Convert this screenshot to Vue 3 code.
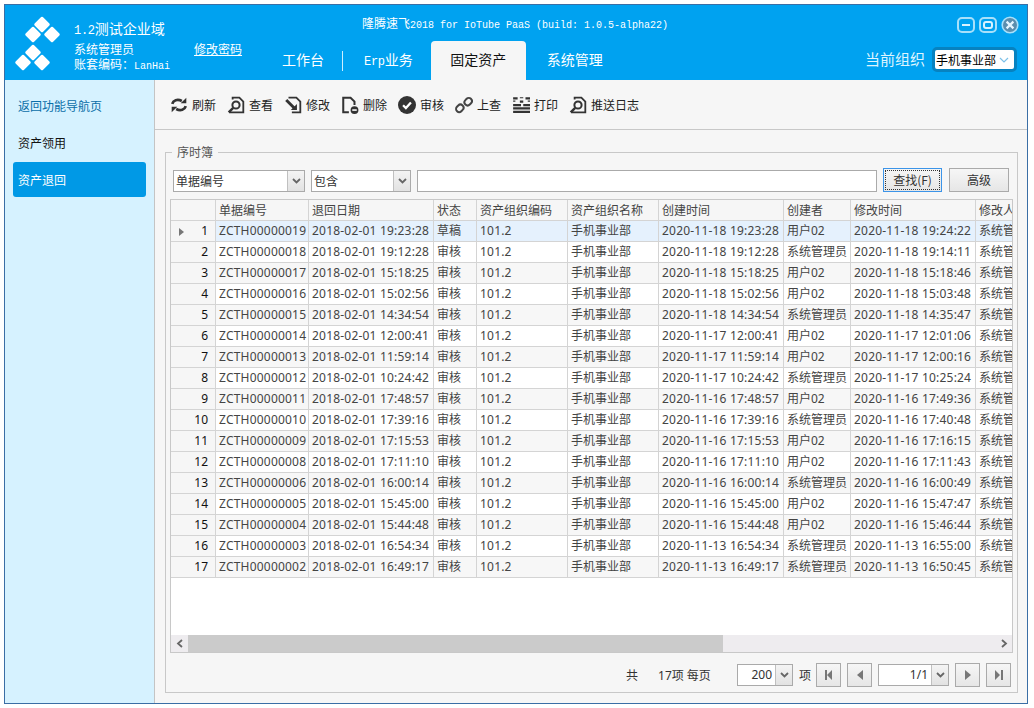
<script setup>
const columns = [
  { label: '单据编号', w: 93 },
  { label: '退回日期', w: 125 },
  { label: '状态', w: 43 },
  { label: '资产组织编码', w: 91 },
  { label: '资产组织名称', w: 91 },
  { label: '创建时间', w: 125 },
  { label: '创建者', w: 67 },
  { label: '修改时间', w: 125 },
  { label: '修改人', w: 60 }
]
const U = '用户02'
const A = '系统管理员'
const raw = [
  ['19', '19:23:28', '11-18', U, '19:24:22'],
  ['18', '19:12:28', '11-18', A, '19:14:11'],
  ['17', '15:18:25', '11-18', U, '15:18:46'],
  ['16', '15:02:56', '11-18', U, '15:03:48'],
  ['15', '14:34:54', '11-18', A, '14:35:47'],
  ['14', '12:00:41', '11-17', U, '12:01:06'],
  ['13', '11:59:14', '11-17', U, '12:00:16'],
  ['12', '10:24:42', '11-17', A, '10:25:24'],
  ['11', '17:48:57', '11-16', U, '17:49:36'],
  ['10', '17:39:16', '11-16', A, '17:40:48'],
  ['09', '17:15:53', '11-16', U, '17:16:15'],
  ['08', '17:11:10', '11-16', U, '17:11:43'],
  ['06', '16:00:14', '11-16', A, '16:00:49'],
  ['05', '15:45:00', '11-16', U, '15:47:47'],
  ['04', '15:44:48', '11-16', U, '15:46:44'],
  ['03', '16:54:34', '11-13', A, '16:55:00'],
  ['02', '16:49:17', '11-13', A, '16:50:45']
]
const rows = raw.map((r, i) => [
  'ZCTH000000' + r[0],
  '2018-02-01 ' + r[1],
  i === 0 ? '草稿' : '审核',
  '101.2',
  '手机事业部',
  '2020-' + r[2] + ' ' + r[1],
  r[3],
  '2020-' + r[2] + ' ' + r[4],
  A
])
const tools = ['刷新', '查看', '修改', '删除', '审核', '上查', '打印', '推送日志']
const isLatin = (v) => /^[\w]/.test(v)
</script>

<template>
  <div class="window">
    <header class="top">
      <svg class="logo" width="58" height="60" viewBox="0 0 58 60">
        <g fill="#fff" stroke="#fff" stroke-width="2.5" stroke-linejoin="round">
          <path d="M32 3l6.500 6.500-6.500 6.500-6.500-6.500z" />
          <path d="M23 13l6.500 6.500-6.500 6.500-6.500-6.500z" />
          <path d="M42 13l6.500 6.500-6.500 6.500-6.500-6.500z" />
          <path d="M23 31l6.500 6.500-6.500 6.500-6.500-6.500z" />
          <path d="M13 41l6.500 6.500-6.500 6.500-6.500-6.500z" />
          <path d="M32 41l6.500 6.500-6.500 6.500-6.500-6.500z" />
        </g>
      </svg>
      <div class="account">
        <div class="domain"><span class="m12">1.2</span>测试企业域</div>
        <div class="uline"><span>系统管理员</span><a class="pwd">修改密码</a></div>
        <div class="ledger">账套编码：<span class="mono">LanHai</span></div>
      </div>
      <div class="center">
        <div class="title">隆腾速飞<span class="mono">2018 for IoTube PaaS (build: 1.0.5-alpha22)</span></div>
        <nav class="tabs">
          <span class="tab">工作台</span>
          <i class="sep"></i>
          <span class="tab erp"><span class="m12">Erp</span>业务</span>
          <span class="tab active">固定资产</span>
          <span class="tab sys">系统管理</span>
        </nav>
      </div>
      <div class="right">
        <div class="winbtns">
          <svg width="18" height="18" viewBox="0 0 18 18"><rect x="1" y="2" width="16" height="14" rx="4" fill="none" stroke="#a8e0fa" stroke-width="2" /><path d="M5 9h8" stroke="#d8f2ff" stroke-width="2" /></svg>
          <svg width="18" height="18" viewBox="0 0 18 18"><rect x="1" y="2" width="16" height="14" rx="4" fill="none" stroke="#a8e0fa" stroke-width="2" /><rect x="5" y="6" width="8" height="6" rx="2" fill="none" stroke="#d8f2ff" stroke-width="2" /></svg>
          <svg width="18" height="18" viewBox="0 0 18 18"><circle cx="9" cy="9" r="7.800" fill="#5b8eae" stroke="#a8e0fa" stroke-width="1.600" /><path d="M5.600 5.600l6.800 6.800M12.400 5.600l-6.800 6.800" stroke="#e4f5ff" stroke-width="2.200" /></svg>
        </div>
        <div class="org">
          <span class="orglabel">当前组织</span>
          <div class="orgsel">
            <span>手机事业部</span>
            <svg width="10" height="6" viewBox="0 0 10 6"><path d="M1 1l4 4 4-4" fill="none" stroke="#7cc0e8" stroke-width="1.200" /></svg>
          </div>
        </div>
      </div>
    </header>

    <div class="body">
      <aside class="side">
        <div class="sitem back">返回功能导航页</div>
        <div class="sitem">资产领用</div>
        <div class="sitem on">资产退回</div>
      </aside>
      <main class="main">
        <div class="toolbar">
          <span class="tool" v-for="(t, i) in tools" :key="t">
            <svg width="18" height="18" viewBox="0 0 16 16" class="ticon">
              <g v-if="i === 0" fill="none" stroke="#333" stroke-width="2.400">
                <path d="M2 7c.8-3 4.500-4.600 8.500-2.500" />
                <path d="M14 9c-.8 3-4.500 4.600-8.500 2.500" />
                <path d="M14.500 1.500v5h-5zM1.500 14.500v-5h5z" fill="#333" stroke="none" />
              </g>
              <g v-else-if="i === 1 || i === 7" fill="none" stroke="#333">
                <path d="M5 3V1.500h6l3.500 3.500v9.500H2" stroke-width="1.600" />
                <circle cx="8" cy="8" r="3.200" stroke-width="1.800" />
                <path d="M5.500 10.500L1.500 14.500" stroke-width="2.200" />
              </g>
              <g v-else-if="i === 2" fill="none" stroke="#333">
                <path d="M4 1.500h7l3.500 3.500v9.500H7" stroke-width="1.600" />
                <path d="M2 3.500l8 8" stroke-width="2.600" />
                <path d="M11.500 7v5.500H6z" fill="#333" stroke="none" />
              </g>
              <g v-else-if="i === 3">
                <path d="M7 14.500H2V1.500h6.500L12 5v3" fill="none" stroke="#333" stroke-width="1.800" />
                <circle cx="12" cy="12.500" r="3.500" fill="#333" />
                <path d="M10 12.500h4" stroke="#fff" stroke-width="1.400" />
              </g>
              <g v-else-if="i === 4">
                <circle cx="8" cy="8" r="8" fill="#333" />
                <path d="M4.500 8.200l2.500 2.500 4.500-5" fill="none" stroke="#fff" stroke-width="2" />
              </g>
              <g v-else-if="i === 5" fill="none" stroke="#444" stroke-width="1.800">
                <rect x="9" y="1.500" width="5.500" height="7" rx="2.700" transform="rotate(45 11.700 5)" />
                <rect x="1.500" y="7.500" width="5.500" height="7" rx="2.700" transform="rotate(45 4.300 11)" />
              </g>
              <g v-else fill="#333">
                <path d="M1 1h4v2H1zM7 1h3v1H7zM12 1h4v2h-4zM1 4h2v1H1zM7 4h3v2H7zM14 4h2v1h-2zM1 7h7v2H1zM10 7h6v2h-6zM1 10h15v2H1zM1 13h15v2H1z" />
              </g>
            </svg>
            {{ t }}
          </span>
        </div>
        <fieldset class="panel">
          <legend>序时簿</legend>
          <div class="search">
            <div class="combo c1"><span class="val">单据编号</span><span class="drop"><svg width="9" height="6" viewBox="0 0 9 6"><path d="M1 1l3.500 3.500L8 1" fill="none" stroke="#666" stroke-width="1.800" /></svg></span></div>
            <div class="combo c2"><span class="val">包含</span><span class="drop"><svg width="9" height="6" viewBox="0 0 9 6"><path d="M1 1l3.500 3.500L8 1" fill="none" stroke="#666" stroke-width="1.800" /></svg></span></div>
            <div class="input"></div>
            <div class="btn find"><span>查找(F)</span></div>
            <div class="btn adv">高级</div>
          </div>
          <div class="grid">
            <div class="gbody">
              <div class="row head">
                <div class="rh"></div>
                <div class="cell" v-for="c in columns" :key="c.label" :style="{ width: c.w + 'px' }">{{ c.label }}</div>
              </div>
              <div class="row" v-for="(r, i) in rows" :key="i" :class="{ sel: i === 0, alt: i > 0 && i % 2 === 0 }">
                <div class="rh">
                  <svg v-if="i === 0" class="mark" width="5" height="8" viewBox="0 0 5 8"><path d="M0 0l5 4-5 4z" fill="#777" /></svg>
                  <span>{{ i + 1 }}</span>
                </div>
                <div class="cell" v-for="(v, j) in r" :key="j" :class="{ lat: isLatin(v) }" :style="{ width: columns[j].w + 'px' }">{{ v }}</div>
              </div>
            </div>
            <div class="hscroll">
              <span class="sarrow"><svg width="8" height="9" viewBox="0 0 8 9"><path d="M6 1L2 4.500 6 8" fill="none" stroke="#666" stroke-width="1.800" /></svg></span>
              <span class="thumb"></span>
              <span class="track"></span>
              <span class="sarrow"><svg width="8" height="9" viewBox="0 0 8 9"><path d="M2 1l4 3.500L2 8" fill="none" stroke="#666" stroke-width="1.800" /></svg></span>
            </div>
          </div>
          <div class="pager">
            <span>共</span>
            <span class="count">17项 每页</span>
            <div class="combo psize"><span class="val right-t">200</span><span class="drop"><svg width="9" height="6" viewBox="0 0 9 6"><path d="M1 1l3.500 3.500L8 1" fill="none" stroke="#666" stroke-width="1.800" /></svg></span></div>
            <span class="unit">项</span>
            <div class="pbtn"><svg width="8" height="12" viewBox="0 0 8 12"><path d="M0 1h2v10H0zM7 1v10L2 6z" fill="#777" /></svg></div>
            <div class="pbtn"><svg width="6" height="12" viewBox="0 0 6 12"><path d="M6 1v10L0 6z" fill="#777" /></svg></div>
            <div class="combo ppage"><span class="val right-t">1/1</span><span class="drop"><svg width="9" height="6" viewBox="0 0 9 6"><path d="M1 1l3.500 3.500L8 1" fill="none" stroke="#666" stroke-width="1.800" /></svg></span></div>
            <div class="pbtn"><svg width="6" height="12" viewBox="0 0 6 12"><path d="M0 1v10l6-5z" fill="#777" /></svg></div>
            <div class="pbtn"><svg width="8" height="12" viewBox="0 0 8 12"><path d="M0 1v10l5-5zM6 1h2v10H6z" fill="#777" /></svg></div>
          </div>
        </fieldset>
      </main>
    </div>
  </div>
</template>

<style scoped>
.window {
  box-sizing: border-box;
  width: 1024px;
  height: 700px;
  margin: 4px 0 0 4px;
  border: 1px solid #3a6ea5;
  display: flex;
  flex-direction: column;
  overflow: hidden;
  font: 12px "Noto Sans", "Noto Sans CJK SC", sans-serif;
  color: #333;
  background: #f6f6f6;
}
.top {
  height: 75px;
  flex: none;
  background: #00a2f0;
  color: #fff;
  display: flex;
}
.logo { flex: none; margin: 10px 0 0 5px; }
.mono { font: 10px "Liberation Mono", monospace; }
.m12 { font: 12px "Liberation Mono", monospace; letter-spacing: -.3px; }
.account {
  width: 148px;
  margin-left: 6px;
  padding-top: 14px;
  line-height: 16px;
  flex: none;
  white-space: nowrap;
  font-family: "Noto Sans CJK SC", sans-serif;
}
.domain { font-size: 14px; line-height: 18px; margin-bottom: 3px; }
.uline { display: flex; }
.ledger { margin-top: -1px; }
.pwd { margin-left: 60px; text-decoration: underline; }
.center { width: 418px; flex: none; margin-left: -4px; display: flex; flex-direction: column; }
.title {
  margin: 11px 0 0 144px;
  white-space: nowrap;
  line-height: 14px;
  font-family: "Noto Sans CJK SC", sans-serif;
}
.tabs {
  display: flex;
  align-items: stretch;
  margin-top: 10px;
  height: 40px;
  font: 14px/37px "Noto Sans CJK SC", sans-serif;
}
.tab { margin-left: 64px; white-space: nowrap; }
.sep { width: 1px; height: 20px; background: #cdeeff; margin: 10px 0 0 18px; }
.tab.erp { margin-left: 21px; }
.tab.active {
  margin-left: 18px;
  width: 95px;
  text-align: center;
  background: #f6f6f6;
  color: #111;
  border-radius: 4px 4px 0 0;
}
.tab.sys { margin-left: 21px; }
.right { flex: 1; min-width: 0; display: flex; flex-direction: column; align-items: flex-end; padding-right: 8px; }
.winbtns { display: flex; gap: 4px; margin-top: 11px; }
.org { display: flex; align-items: center; margin-top: 13px; margin-right: 2px; white-space: nowrap; }
.orglabel { font: 15px "Noto Sans CJK SC", sans-serif; color: #dff5ff; margin-right: 7px; position: relative; top: -1px; }
.orgsel {
  box-sizing: border-box;
  width: 85px;
  height: 25px;
  flex: none;
  border: 3px solid #0782c0;
  border-radius: 5px;
  background: #fff;
  color: #000;
  display: flex;
  align-items: center;
  justify-content: space-between;
  padding: 0 5px 0 1px;
  font-family: "Noto Sans CJK SC", sans-serif;
}
.body { flex: 1; min-height: 0; display: flex; }
.side {
  width: 150px;
  flex: none;
  box-sizing: border-box;
  background: #d6f2ff;
  border-right: 1px solid #c4c4c4;
  padding: 7px 8px 0;
  font-family: "Noto Sans CJK SC", sans-serif;
}
.sitem { height: 37px; line-height: 37px; padding-left: 5px; color: #111; }
.sitem.back { color: #0a6ea8; }
.sitem.on {
  height: 35px;
  line-height: 35px;
  margin-top: 1px;
  background: #0099e6;
  color: #fff;
  border-radius: 3px;
}
.main { flex: 1; min-width: 0; display: flex; flex-direction: column; }
.toolbar {
  height: 50px;
  flex: none;
  box-sizing: border-box;
  border-bottom: 1px solid #c8c8c8;
  display: flex;
  align-items: center;
  padding: 0 0 0 17px;
  gap: 13px;
  font-family: "Noto Sans CJK SC", sans-serif;
  color: #222;
}
.tool { display: flex; align-items: center; gap: 4px; white-space: nowrap; }
.ticon { flex: none; margin-left: -2px; }
.panel {
  flex: 1;
  min-width: 0;
  min-height: 0;
  margin: 14px 9px 10px 10px;
  padding: 0 4px 0 4px;
  border: 1px solid #c8c8c8;
  display: flex;
  flex-direction: column;
}
legend { margin-left: 2px; padding: 0 5px; line-height: 16px; color: #555; font-family: "Noto Sans CJK SC", sans-serif; }
.search { display: flex; height: 24px; margin-top: 8px; align-items: flex-end; flex: none; padding-left: 3px; }
.combo {
  box-sizing: border-box;
  height: 22px;
  border: 1px solid #aaa;
  background: #fff;
  display: flex;
  flex: none;
  color: #333;
  font-family: "Noto Sans CJK SC", sans-serif;
}
.c1 { width: 132px; margin-right: 6px; }
.c2 { width: 100px; margin-right: 6px; }
.val { flex: 1; padding-left: 2px; line-height: 20px; min-width: 0; }
.right-t { text-align: right; padding: 0 3px 0 0; font-family: "Noto Sans", sans-serif; }
.drop {
  width: 16px;
  flex: none;
  border-left: 1px solid #c0c0c0;
  background: linear-gradient(#f4f4f4, #e2e2e2);
  display: flex;
  align-items: center;
  justify-content: center;
}
.input { box-sizing: border-box; width: 460px; height: 22px; border: 1px solid #aaa; background: #fff; }
.btn {
  box-sizing: border-box;
  height: 24px;
  border: 1px solid #aaa;
  background: linear-gradient(#f6f6f6, #e6e6e6);
  text-align: center;
  line-height: 22px;
  flex: none;
  font-family: "Noto Sans CJK SC", sans-serif;
}
.find { width: 59px; margin-left: 6px; border-color: #3c94e8; padding: 1px; line-height: 20px; }
.find span { display: block; border: 1px dotted #333; height: 20px; line-height: 18px; box-sizing: border-box; }
.adv { width: 60px; margin-left: 7px; }
.grid {
  box-sizing: border-box;
  height: 454px;
  margin-top: 7px;
  flex: none;
  border: 1px solid #c8c8c8;
  background: #fff;
  display: flex;
  flex-direction: column;
  overflow: hidden;
}
.gbody { flex: 1; min-height: 0; overflow: hidden; }
.row { display: flex; height: 21px; line-height: 20px; }
.row .cell, .row .rh { box-sizing: border-box; height: 21px; border-right: 1px solid #d4d4d4; border-bottom: 1px solid #d4d4d4; flex: none; }
.cell { padding-left: 3px; white-space: nowrap; overflow: hidden; color: #444; }
.cell.lat { letter-spacing: .2px; }
.row.head { background: #f6f6f6; }
.row.head .cell { font-family: "Noto Sans CJK SC", sans-serif; color: #444; }
.row.sel .cell { background: #e5f1fd; }
.row.alt .cell { background: #f7f7f7; }
.rh { width: 45px; background: #f6f6f6; position: relative; text-align: right; padding-right: 7px; color: #111; }
.mark { position: absolute; left: 8px; top: 7px; }
.hscroll { height: 17px; flex: none; display: flex; background: #eeecef; }
.sarrow { width: 17px; display: flex; align-items: center; justify-content: center; flex: none; }
.thumb { width: 535px; background: #cbcbcb; flex: none; }
.track { flex: 1; }
.pager {
  flex: 1;
  display: flex;
  align-items: center;
  padding: 5px 0 0 456px;
  white-space: nowrap;
  color: #333;
  font-family: "Noto Sans", "Noto Sans CJK SC", sans-serif;
}
.count { margin-left: 20px; width: 53px; flex: none; overflow: visible; }
.psize { width: 56px; margin-left: 26px; }
.unit { margin: 0 5px 0 6px; flex: none; }
.pbtn {
  box-sizing: border-box;
  width: 25px;
  height: 24px;
  border: 1px solid #aaa;
  background: linear-gradient(#f6f6f6, #e6e6e6);
  display: flex;
  align-items: center;
  justify-content: center;
  flex: none;
  margin-right: 6px;
}
.pbtn:last-child { margin-right: 0; }
.ppage { width: 71px; margin-right: 6px; }
</style>

<style>
html, body { margin: 0; background: #fff; }
</style>
